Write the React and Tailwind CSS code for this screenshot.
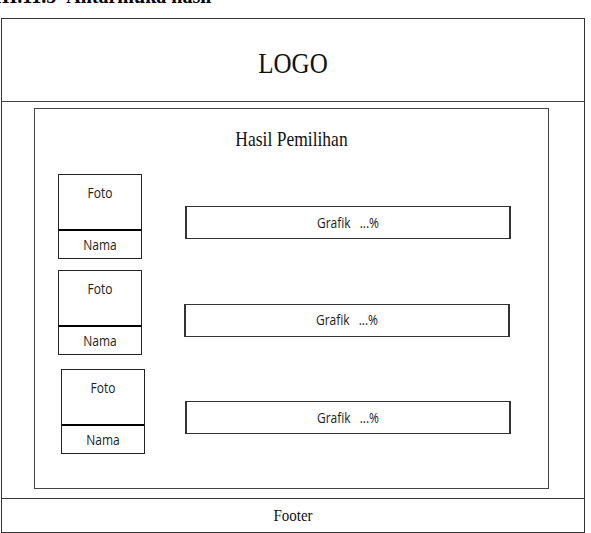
const serif = "font-['Liberation_Serif',_'Times_New_Roman',_serif]";
const sans = "font-['Open_Sans',_'Noto_Sans',_sans-serif]";

const rows = [
  { box: "mt-[65px] ml-[23px]", bar: "mt-[12px] ml-[43px]" },
  { box: "mt-[11px] ml-[23px]", bar: "mt-[15px] ml-[42px]" },
  { box: "mt-[14px] ml-[26px]", bar: "mt-[12px] ml-[40px]" },
];

function CandidateRow({ box, bar }) {
  return (
    <div className={`flex items-center ${box}`}>
      <div className="w-[84px] h-[85px] border border-[#222] flex flex-col shrink-0">
        <div className={`flex-1 flex justify-center pt-[9px] text-[12px] text-[#222] ${sans}`}>
          <span className="inline-block h-fit scale-y-[1.15]">Foto</span>
        </div>
        <div className={`h-[29px] border-t-2 border-black flex items-center justify-center text-[12px] text-[#222] ${sans}`}>
          <span className="inline-block scale-y-[1.15]">Nama</span>
        </div>
      </div>
      <div
        className={`w-[326px] h-[33px] border border-[#333] border-x-2 flex items-center justify-center text-[12px] text-[#222] ${sans} ${bar}`}
      >
        <span className="inline-block scale-y-[1.15]">Grafik</span>
        <span className="inline-block ml-[9px] scale-y-[1.15]">...%</span>
      </div>
    </div>
  );
}

export default function App() {
  return (
    <div className="w-[591px] h-[533px] bg-white overflow-hidden">
      {/* document caption, mostly cropped off the top */}
      <div className="h-[18px] overflow-hidden">
        <div className={`-mt-[14px] -ml-[6px] text-[20px] leading-[20px] font-bold text-black whitespace-nowrap ${serif}`}>
          III.11.5<span className="ml-[10px]">Antarmuka hasil</span>
        </div>
      </div>

      <div className="ml-[1px] w-[584px] h-[515px] border-[1.5px] border-[#333] flex flex-col">
        {/* header */}
        <div className="h-[83px] border-b-[1.5px] border-[#444] flex items-center justify-center shrink-0">
          <span className={`inline-block mt-[5px] text-[25px] leading-none text-[#111] scale-y-[1.22] ${serif}`}>LOGO</span>
        </div>

        {/* content */}
        <div className="flex-1 pl-[32px] pt-[6px] pb-[9px] border-b-[1.5px] border-[#333]">
          <div className="w-[515px] h-full border-[1.5px] border-[#444] flex flex-col">
            <div className="h-0 flex justify-center">
              <span className={`inline-block mt-[20px] text-[17.5px] leading-none text-[#111] scale-y-[1.2] ${serif}`}>
                Hasil Pemilihan
              </span>
            </div>
            {rows.map((r, i) => (
              <CandidateRow key={i} box={r.box} bar={r.bar} />
            ))}
          </div>
        </div>

        {/* footer */}
        <div className="h-[33px] flex items-center justify-center shrink-0">
          <span className={`inline-block text-[15px] leading-none text-[#111] scale-y-[1.15] ${serif}`}>Footer</span>
        </div>
      </div>
    </div>
  );
}
